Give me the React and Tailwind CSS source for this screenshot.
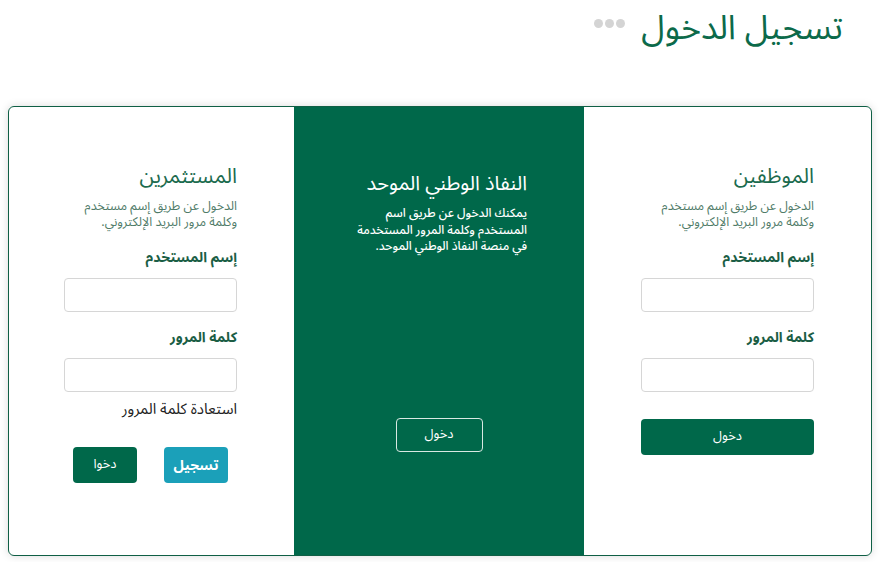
import React from 'react'

const font = { fontFamily: '"Noto Sans Arabic", "DejaVu Sans", sans-serif' }

function LoginColumn({ title, investors }) {
    return (
        <div className="px-[57px] pt-[54px] pb-10 flex flex-col">
            <h3 className="text-[21px] leading-[30px] text-[#1b6b4e]">{title}</h3>
            <p className="mt-[7px] text-[12.5px] leading-4 text-[#4f7b68]">
                الدخول عن طريق إسم مستخدم وكلمة مرور البريد الإلكتروني.
            </p>
            <label className="mt-[18px] text-[14px] font-bold text-[#1b5e45] leading-5">إسم المستخدم</label>
            <input type="text" className="mt-[10px] h-[34px] w-full rounded border border-[#d6d6d6] bg-white outline-none" />
            <label className="mt-[16px] text-[14px] font-bold text-[#1b5e45] leading-5">كلمة المرور</label>
            <input type="password" className="mt-[10px] h-[34px] w-full rounded border border-[#d6d6d6] bg-white outline-none" />
            {investors ? (
                <>
                    <a className="mt-[5px] text-[15px] text-[#222] leading-6">استعادة كلمة المرور</a>
                    <div className="mt-[26px] flex gap-[27px] pr-[9px]">
                        <button className="w-[64px] h-[36px] rounded bg-[#1ba0b9] text-white text-[14px] font-bold">تسجيل</button>
                        <button className="w-[64px] h-[36px] rounded bg-[#00684a] text-white text-[13px]">دخوا</button>
                    </div>
                </>
            ) : (
                <button className="mt-[27px] h-[36px] w-full rounded bg-[#00684a] text-white text-[13px]">دخول</button>
            )}
        </div>
    )
}

export default function App() {
    return (
        <div dir="rtl" className="w-[881px] h-[562px] bg-white overflow-hidden" style={font}>
            <div className="flex items-start gap-4 pr-[38px] pt-[2px] h-[106px]">
                <h1 className="text-[34px] leading-[52px] text-[#0c6a4a]">تسجيل الدخول</h1>
                <div className="flex gap-[2px] mt-[17px]">
                    <span className="w-[9px] h-[9px] rounded-full bg-[#d4d4d4]" />
                    <span className="w-[9px] h-[9px] rounded-full bg-[#d4d4d4]" />
                    <span className="w-[9px] h-[9px] rounded-full bg-[#d4d4d4]" />
                </div>
            </div>
            <div className="mr-[9px] ml-[8px] h-[450px] grid grid-cols-[287px_290px_287px] rounded-md border border-[#0f5f45] shadow-[0_0_8px_rgba(0,0,0,0.15)] overflow-hidden">
                <LoginColumn title="الموظفين" />
                <div className="bg-[#00684a] -my-px px-[57px] pt-[64px] flex flex-col">
                    <h3 className="text-[20px] leading-7 text-white">النفاذ الوطني الموحد</h3>
                    <p className="mt-[8px] text-[12px] font-medium leading-[16.5px] text-white">
                        يمكنك الدخول عن طريق اسم المستخدم وكلمة المرور المستخدمة في منصة النفاذ الوطني الموحد.
                    </p>
                    <div className="flex justify-center mt-[162px]">
                        <button className="w-[87px] h-[34px] rounded border border-[#d9e8e2] text-white text-[13px]">دخول</button>
                    </div>
                </div>
                <LoginColumn title="المستثمرين" investors />
            </div>
        </div>
    )
}
